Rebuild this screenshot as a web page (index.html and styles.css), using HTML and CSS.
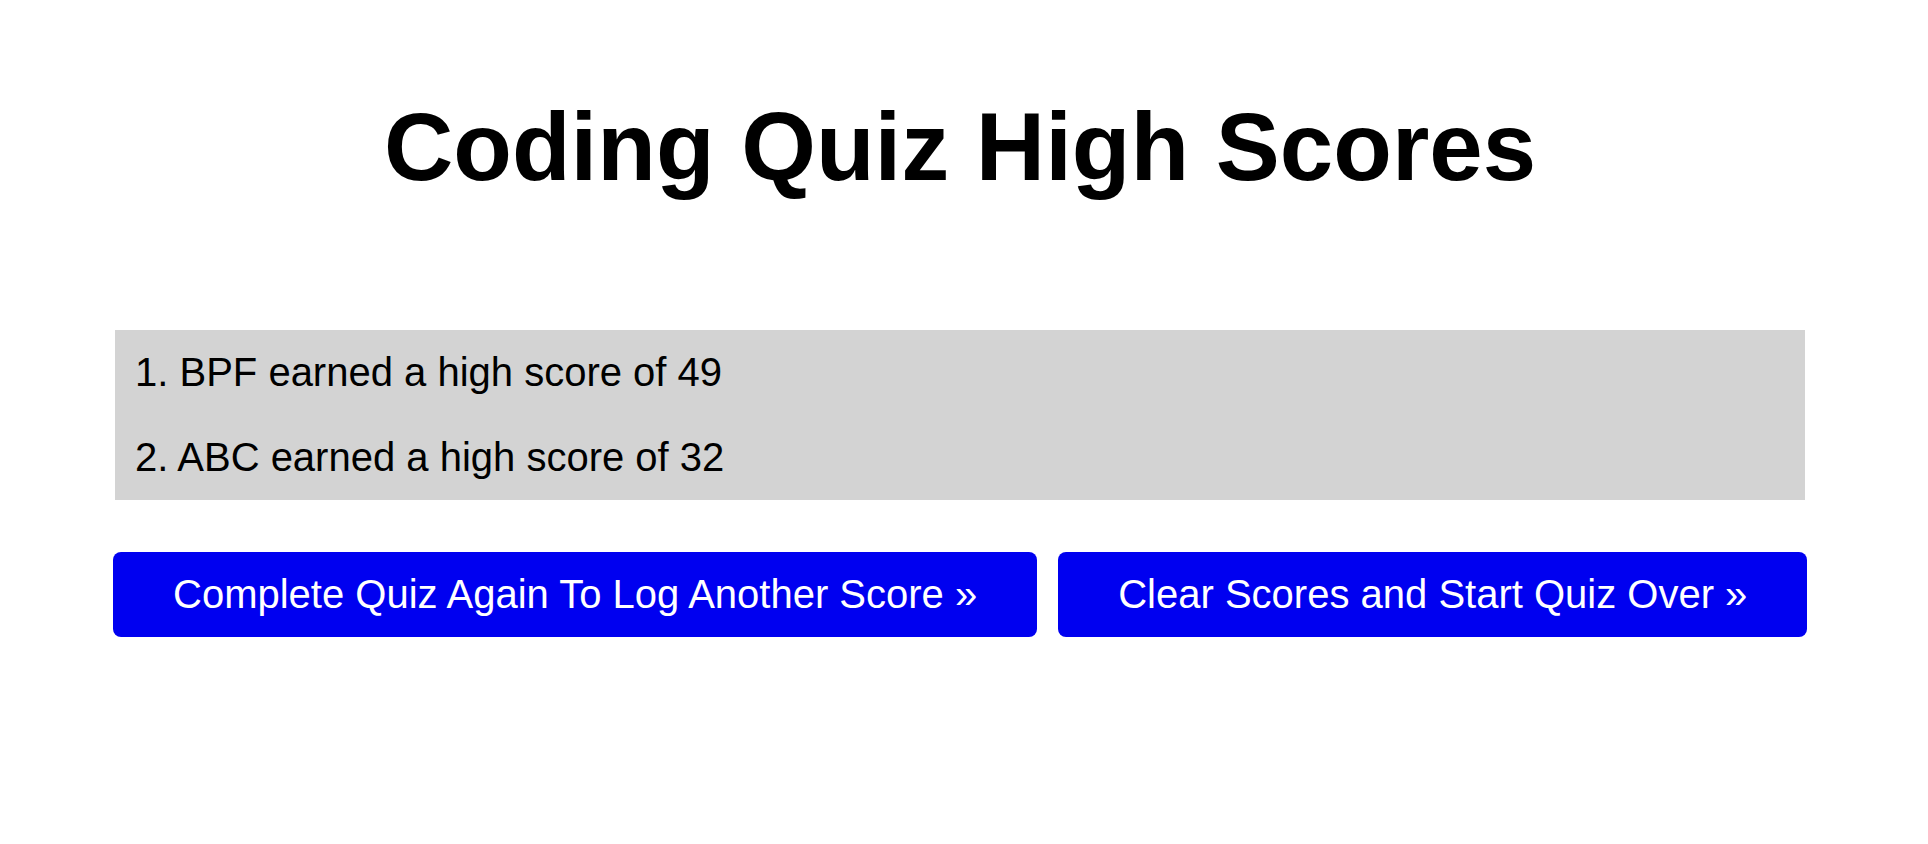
FILE: index.html
```html
<!DOCTYPE html>
<html lang="en">
<head>
<meta charset="utf-8">
<title>Coding Quiz High Scores</title>
<link rel="stylesheet" href="styles.css">
</head>
<body>
<div class="page">
  <h1 class="title">Coding Quiz High Scores</h1>
  <main class="container">
    <ol class="scores">
      <li class="score">1. BPF earned a high score of 49</li>
      <li class="score">2. ABC earned a high score of 32</li>
    </ol>
    <div class="actions">
      <button class="btn" type="button">Complete Quiz Again To Log Another Score »</button>
      <button class="btn" type="button">Clear Scores and Start Quiz Over »</button>
    </div>
  </main>
</div>
</body>
</html>
```

FILE: styles.css
```css
html, body {
  margin: 0;
  padding: 0;
  background: #ffffff;
}

body {
  font-family: "Liberation Sans", Arial, Helvetica, sans-serif;
  color: #000000;
}

.page {
  width: 1920px;
}

.title {
  margin: 92px 0 0;
  font-size: 96px;
  font-weight: 700;
  line-height: normal;
  text-align: center;
}

.container {
  width: 1694px;
  margin: 128px auto 0;
}

.scores {
  list-style: none;
  margin: 0 2px;
  padding: 0;
  background: #d3d3d3;
}

.score {
  font-size: 40px;
  line-height: 46px;
  padding: 19px 20px 20px;
}

.actions {
  display: flex;
  gap: 21px;
  margin-top: 52px;
}

.btn {
  flex: 1 1 auto;
  font-family: "Liberation Sans", Arial, Helvetica, sans-serif;
  font-size: 40px;
  line-height: 46px;
  padding: 19px 60px 20px;
  border: 0;
  border-radius: 8px;
  background: #0000f0;
  color: #ffffff;
  cursor: pointer;
  white-space: nowrap;
}
```
